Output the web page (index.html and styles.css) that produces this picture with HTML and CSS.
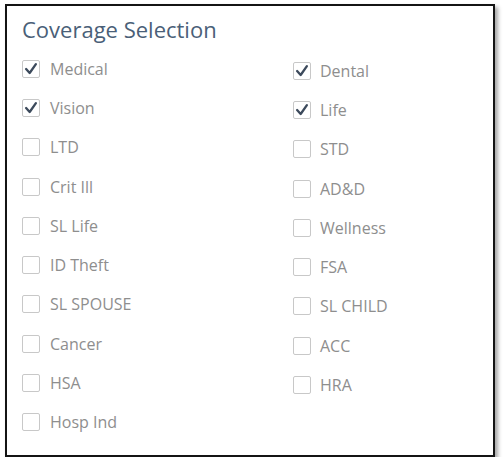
FILE: index.html
```html
<!DOCTYPE html>
<html lang="en">
<head>
  <meta charset="UTF-8">
  <title>Coverage Selection</title>
  <link rel="stylesheet" href="styles.css">
</head>
<body>
  <div class="panel">
    <h2 class="title">Coverage Selection</h2>
    <div class="options">
      <ul class="col">
        <li><span class="box checked"><svg viewBox="0 0 18 18"><polyline points="3.5,9 7.5,13.5 14.5,3.5"/></svg></span>Medical</li>
        <li><span class="box checked"><svg viewBox="0 0 18 18"><polyline points="3.5,9 7.5,13.5 14.5,3.5"/></svg></span>Vision</li>
        <li><span class="box"></span>LTD</li>
        <li><span class="box"></span>Crit Ill</li>
        <li><span class="box"></span>SL Life</li>
        <li><span class="box"></span>ID Theft</li>
        <li><span class="box"></span>SL SPOUSE</li>
        <li><span class="box"></span>Cancer</li>
        <li><span class="box"></span>HSA</li>
        <li><span class="box"></span>Hosp Ind</li>
      </ul>
      <ul class="col right">
        <li><span class="box checked"><svg viewBox="0 0 18 18"><polyline points="3.5,9 7.5,13.5 14.5,3.5"/></svg></span>Dental</li>
        <li><span class="box checked"><svg viewBox="0 0 18 18"><polyline points="3.5,9 7.5,13.5 14.5,3.5"/></svg></span>Life</li>
        <li><span class="box"></span>STD</li>
        <li><span class="box"></span>AD&amp;D</li>
        <li><span class="box"></span>Wellness</li>
        <li><span class="box"></span>FSA</li>
        <li><span class="box"></span>SL CHILD</li>
        <li><span class="box"></span>ACC</li>
        <li><span class="box"></span>HRA</li>
      </ul>
    </div>
  </div>
</body>
</html>
```

FILE: styles.css
```css
body {
  margin: 0;
  background: #fff;
  font-family: 'Open Sans', sans-serif;
}
.panel {
  box-sizing: border-box;
  width: 490px;
  height: 453px;
  margin: 4px 0 0 5px;
  padding: 9px 0 0 15px;
  border: 2px solid #141414;
  background: #fff;
  box-shadow: 3px 3px 4px rgba(0, 0, 0, 0.35);
}
.title {
  margin: 0 0 5px;
  font-size: 22px;
  line-height: 29px;
  font-weight: 400;
  color: #4a5f78;
}
.options {
  display: flex;
}
.col {
  list-style: none;
  margin: 0;
  padding: 0;
  width: 271px;
  flex-shrink: 0;
}
.col.right {
  width: auto;
  flex-shrink: 1;
  padding-top: 2px;
}
.col li {
  display: flex;
  align-items: center;
  height: 39.3px;
  font-size: 16px;
  color: #8e8e8e;
}
.box {
  box-sizing: border-box;
  width: 18px;
  height: 18px;
  margin-right: 10px;
  border: 1px solid #c8c8c8;
  border-radius: 2px;
  background: #fff;
}
.right .box {
  margin-right: 9px;
}
.box svg {
  display: block;
  width: 16px;
  height: 16px;
}
.box polyline {
  fill: none;
  stroke: #3c4a5c;
  stroke-width: 2.6;
  stroke-linecap: round;
  stroke-linejoin: round;
}
```
